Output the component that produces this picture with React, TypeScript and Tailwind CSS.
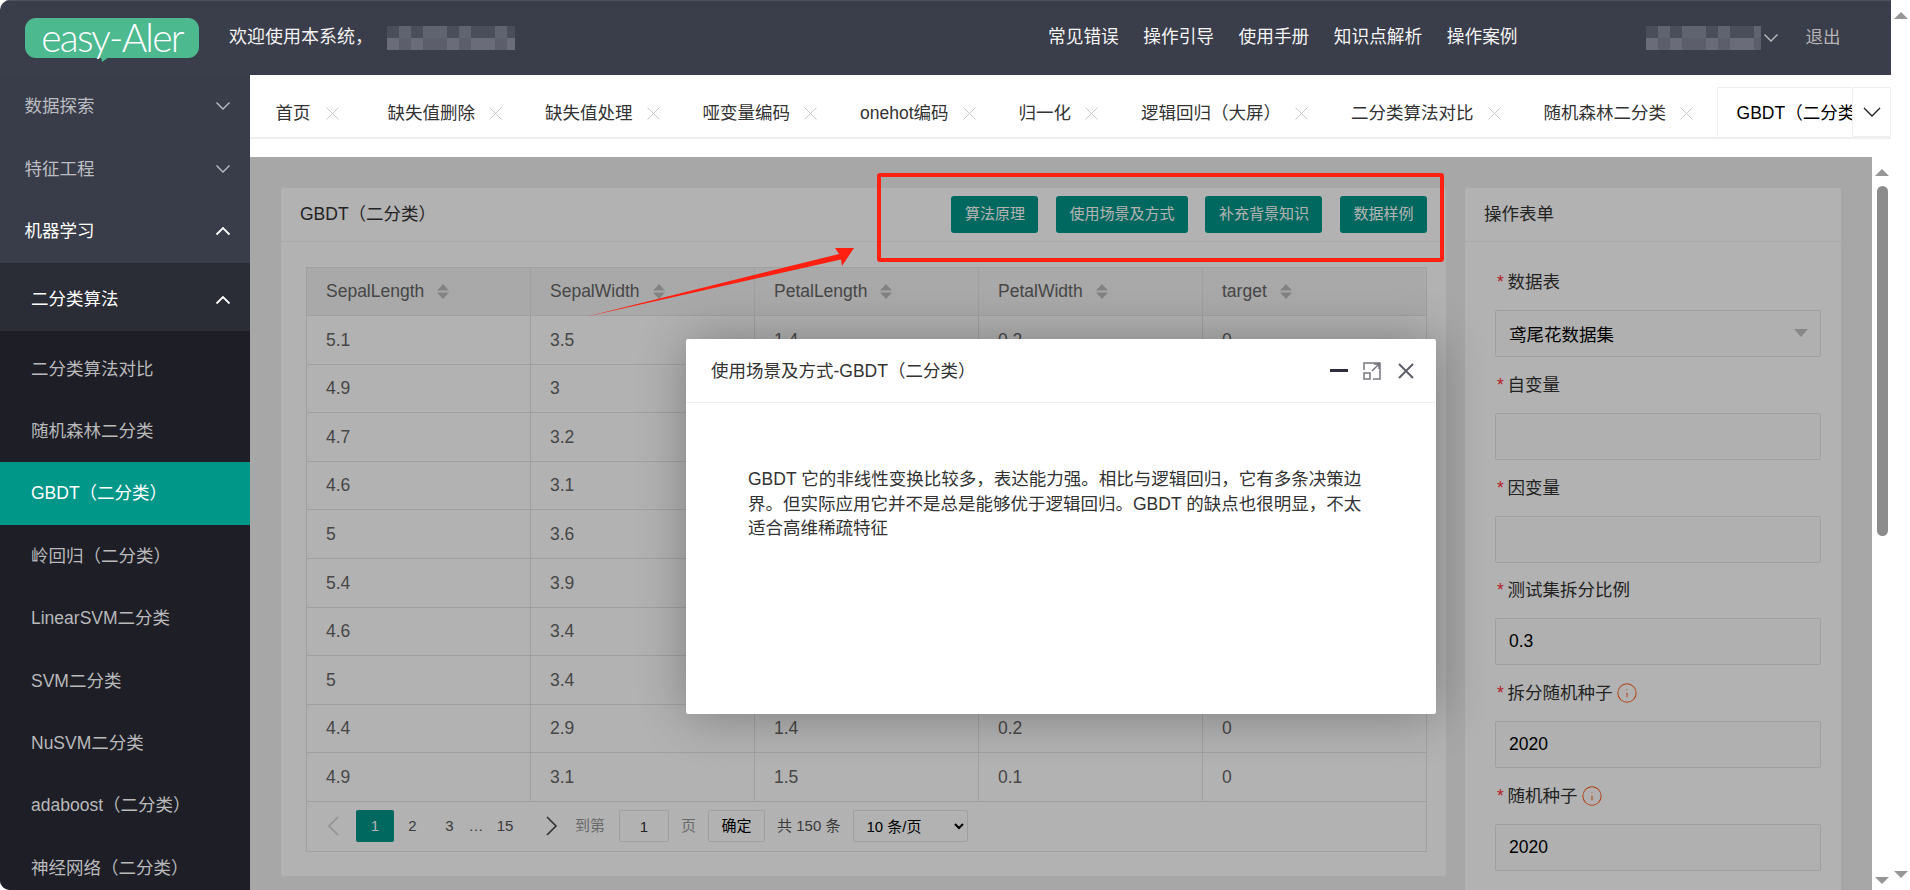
import { Info } from "lucide-react";

const topMenus = [
  { label: "数据探索", open: false },
  { label: "特征工程", open: false },
  { label: "机器学习", open: true },
];

const subMenus = [
  "二分类算法对比",
  "随机森林二分类",
  "GBDT（二分类）",
  "岭回归（二分类）",
  "LinearSVM二分类",
  "SVM二分类",
  "NuSVM二分类",
  "adaboost（二分类）",
  "神经网络（二分类）",
];

const navLinks = ["常见错误", "操作引导", "使用手册", "知识点解析", "操作案例"];

const tabs = ["缺失值删除", "缺失值处理", "哑变量编码", "onehot编码", "归一化", "逻辑回归（大屏）", "二分类算法对比", "随机森林二分类"];

const actions = ["算法原理", "使用场景及方式", "补充背景知识", "数据样例"];

const columns = ["SepalLength", "SepalWidth", "PetalLength", "PetalWidth", "target"];

const rows = [
  ["5.1", "3.5", "1.4", "0.2", "0"],
  ["4.9", "3", "1.4", "0.2", "0"],
  ["4.7", "3.2", "1.3", "0.2", "0"],
  ["4.6", "3.1", "1.5", "0.2", "0"],
  ["5", "3.6", "1.4", "0.2", "0"],
  ["5.4", "3.9", "1.7", "0.4", "0"],
  ["4.6", "3.4", "1.4", "0.3", "0"],
  ["5", "3.4", "1.5", "0.2", "0"],
  ["4.4", "2.9", "1.4", "0.2", "0"],
  ["4.9", "3.1", "1.5", "0.1", "0"],
];

const formItems = [
  { label: "数据表", value: "鸢尾花数据集", select: true },
  { label: "自变量", value: "" },
  { label: "因变量", value: "" },
  { label: "测试集拆分比例", value: "0.3" },
  { label: "拆分随机种子", value: "2020", tip: true },
  { label: "随机种子", value: "2020", tip: true },
];

const mosaicShades = ["#4a4d5a", "#5c5f6b", "#666975", "#535663", "#606370", "#6a6d79", "#565966", "#5f626e"];

function Mosaic({ width, height }: { width: number; height: number }) {
  const cols = Math.ceil(width / 12);
  const cells = [];
  for (let y = 0; y < 2; y++) {
    for (let x = 0; x < cols; x++) {
      cells.push(
        <rect key={`${x}-${y}`} x={x * 12} y={y * 12} width="12" height="12" fill={mosaicShades[(x * 3 + y * 5 + (x % 4)) % mosaicShades.length]} />
      );
    }
  }
  return (
    <svg width={width} height={height} viewBox={`0 0 ${width} ${height}`} className="block shrink-0">
      {cells}
    </svg>
  );
}

function Chevron({ up, className, width = 1.4 }: { up?: boolean; className?: string; width?: number }) {
  return (
    <svg width="16" height="10" viewBox="0 0 16 10" fill="none" stroke="currentColor" strokeWidth={width} className={className}>
      <path d={up ? "M1.5 8.5 8 2l6.5 6.5" : "M1.5 1.5 8 8l6.5-6.5"} />
    </svg>
  );
}

function TabClose() {
  return (
    <svg width="13" height="13" viewBox="0 0 13 13" stroke="#c9c9c9" strokeWidth="1" className="shrink-0">
      <path d="M.5.5l12 12M12.5.5l-12 12" />
    </svg>
  );
}

function SortIcon() {
  return (
    <svg width="12" height="15" viewBox="0 0 12 15" fill="#bcbcbc" className="ml-[13px] shrink-0">
      <path d="M6 0l6 6.5H0zM6 15L0 8.5h12z" />
    </svg>
  );
}

function Pager() {
  const cell = "flex h-8 items-center justify-center";
  return (
    <div className="flex h-[50px] items-center border-x border-b border-[#e6e6e6] pl-5 text-[15px] text-[#555]">
      <svg width="12" height="20" viewBox="0 0 12 20" fill="none" stroke="#d0d0d0" strokeWidth="1.6" className="mr-[17px]">
        <path d="M11 1 2 10l9 9" />
      </svg>
      <div className={`${cell} w-[38px] rounded-[2px] bg-[#009688] text-white`}>1</div>
      <div className={`${cell} w-[37px]`}>2</div>
      <div className={`${cell} w-[37px]`}>3</div>
      <div className={`${cell} w-[16px]`}>…</div>
      <div className={`${cell} w-[42px]`}>15</div>
      <svg width="12" height="20" viewBox="0 0 12 20" fill="none" stroke="#444" strokeWidth="1.6" className="ml-5">
        <path d="M1 1l9 9-9 9" />
      </svg>
      <span className="ml-[17px] text-[#999]">到第</span>
      <input defaultValue="1" className="ml-[14px] h-8 w-[50px] rounded-[2px] border border-[#e6e6e6] text-center text-[#333] outline-none" />
      <span className="ml-3 text-[#999]">页</span>
      <button className="ml-3 h-8 w-[57px] rounded-[2px] border border-[#e6e6e6] text-black">确定</button>
      <span className="ml-3">共 150 条</span>
      <select defaultValue="10" className="ml-[13px] h-8 w-[115px] rounded-[2px] border border-[#e6e6e6] pl-2 text-black outline-none">
        <option value="10">10 条/页</option>
        <option value="20">20 条/页</option>
      </select>
    </div>
  );
}

function FormField({ item }: { item: (typeof formItems)[number] }) {
  return (
    <div className="h-[102.8px]">
      <div className="flex h-[47px] items-start pl-[2px] text-[17.5px] leading-[38px] text-[#333]">
        <span className="w-[10.5px] text-[#ff2b3a]">*</span>
        {item.label}
        {item.tip && <Info size={22} strokeWidth={1.1} color="#ff5a1f" className="ml-[3px] mt-[8px]" />}
      </div>
      <div className="relative">
        <input
          readOnly
          defaultValue={item.value}
          className="h-[47px] w-full rounded-[2px] border border-[#e6e6e6] bg-[#fcfcfc] pl-[13px] text-[17.5px] text-black outline-none"
        />
        {item.select && (
          <svg width="14" height="8" viewBox="0 0 14 8" fill="#c2c2c2" className="absolute right-[13px] top-[19px]">
            <path d="M0 0h14L7 8z" />
          </svg>
        )}
      </div>
    </div>
  );
}

export default function App() {
  return (
    <div className="flex h-[890px] w-[1910px] overflow-hidden rounded-[10px] bg-white font-['Liberation_Sans','Noto_Sans_CJK_SC',sans-serif]">
      <div className="flex min-w-0 flex-1 flex-col">
        <header className="flex h-[75px] shrink-0 items-center border-t border-[#4f525e] bg-[#3a3d4a] pb-px">
          <div className="relative ml-[25px] flex h-10 w-[174px] items-center justify-center rounded-[11px] bg-[#4cb98f] font-['Lato',sans-serif] text-[39px] font-light leading-none tracking-[-1.8px] text-white">
            easy-Aler
            <svg width="8" height="5" viewBox="0 0 8 5" fill="#4cb98f" className="absolute left-[76px] top-[39px]">
              <path d="M0 0h8L1 5z" />
            </svg>
          </div>
          <span className="ml-[30px] text-[18px] text-[#f2f2f2]">欢迎使用本系统，</span>
          <div className="ml-[14px]">
            <Mosaic width={128} height={24} />
          </div>
          <nav className="ml-[533px] flex gap-[24.5px] text-[17.7px] text-[#f5f5f5]">
            {navLinks.map((link) => (
              <span key={link}>{link}</span>
            ))}
          </nav>
          <div className="ml-[128px]">
            <Mosaic width={115} height={24} />
          </div>
          <Chevron className="ml-[2px] text-[#bdbdbd]" />
          <span className="ml-[27px] text-[17.5px] text-[#b5b5b5]">退出</span>
        </header>

        <div className="flex min-h-0 flex-1">
          <aside className="w-[250px] shrink-0 overflow-hidden bg-[#393d49] text-[17.5px]">
            {topMenus.map((menu) => (
              <div
                key={menu.label}
                className={`flex h-[62.5px] items-center justify-between pl-[24.5px] pr-[19px] ${menu.open ? "text-white" : "text-[#bcbdc2]"}`}
              >
                {menu.label}
                <Chevron up={menu.open} width={menu.open ? 1.8 : 1.4} />
              </div>
            ))}
            <div className="flex h-[68px] items-center justify-between bg-[#2a2c36] pl-[31px] pr-[19px] pt-[6px] text-white">
              二分类算法
              <Chevron up width={1.8} />
            </div>
            <ul className="bg-[#1d1e26] pt-[7px] text-[#b9b9bb]">
              {subMenus.map((menu) => (
                <li
                  key={menu}
                  className={`flex h-[62.4px] items-center pl-[31px] ${menu === "GBDT（二分类）" ? "bg-[#009688] text-white" : ""}`}
                >
                  {menu}
                </li>
              ))}
            </ul>
          </aside>

          <main className="flex min-w-0 flex-1 flex-col">
            <div className="flex h-[64px] shrink-0 items-end border-b-2 border-[#eeeeee] text-[17.5px] text-[#333]">
              <div className="flex h-[50px] min-w-0 flex-1 overflow-hidden pl-1">
                <div className="mr-[6px] flex shrink-0 items-center gap-[15px] px-[21.5px] pt-[2px]">
                  首页
                  <TabClose />
                </div>
                {tabs.map((tab) => (
                  <div key={tab} className="flex shrink-0 items-center gap-[14px] px-[21.5px] pt-[2px]">
                    {tab}
                    <TabClose />
                  </div>
                ))}
                <div className="ml-[2px] flex shrink-0 items-center rounded-t-[2px] border-x border-t border-[#eeeeee] pl-[19px] pt-[2px] text-black">
                  GBDT（二分类）
                </div>
              </div>
              <div className="flex h-[50px] w-[39px] shrink-0 items-center justify-center rounded-t-[2px] border border-[#eeeeee] bg-white">
                <svg width="20" height="12" viewBox="0 0 20 12" fill="none" stroke="#222" strokeWidth="1.4">
                  <path d="M2 2l8 8 8-8" />
                </svg>
              </div>
            </div>
            <div className="h-[18px] shrink-0" />

            <div className="flex min-h-0 flex-1">
              <div className="relative min-w-0 flex-1 overflow-hidden">
                <div className="flex items-start gap-[19px] bg-[#f0f0f0] p-[31px]">
                  <section className="h-[688px] w-[1165px] shrink-0 rounded-[3px] bg-white">
                    <div className="flex h-[54px] items-center justify-between border-b border-[#f2f2f2] pl-[19px] pr-[19px]">
                      <h2 className="text-[17.5px] text-[#333]">GBDT（二分类）</h2>
                      <div className="flex gap-[17.5px]">
                        {actions.map((action) => (
                          <button key={action} className="h-[37px] rounded-[3px] bg-[#009688] px-[13.5px] text-[15px] text-white">
                            {action}
                          </button>
                        ))}
                      </div>
                    </div>
                    <div className="pl-[25px] pr-[19px] pt-[25px]">
                      <table className="w-full table-fixed border-collapse text-[17.5px] text-[#666]">
                        <thead>
                          <tr className="h-[48px] bg-[#f2f2f2]">
                            {columns.map((column) => (
                              <th key={column} className="border border-[#e6e6e6] pl-[19px] text-left font-normal">
                                <div className="flex items-center">
                                  {column}
                                  <SortIcon />
                                </div>
                              </th>
                            ))}
                          </tr>
                        </thead>
                        <tbody>
                          {rows.map((row, i) => (
                            <tr key={i} className="h-[48.6px]">
                              {row.map((value, j) => (
                                <td key={j} className="border border-[#e6e6e6] pl-[19px]">
                                  {value}
                                </td>
                              ))}
                            </tr>
                          ))}
                        </tbody>
                      </table>
                      <Pager />
                    </div>
                  </section>

                  <section className="w-[376px] shrink-0 rounded-[3px] bg-white">
                    <div className="flex h-[54px] items-center border-b border-[#f2f2f2] pl-[19px] text-[17.5px] text-[#333]">操作表单</div>
                    <div className="pl-[30px] pr-5 pt-[21px]">
                      {formItems.map((item) => (
                        <FormField key={item.label} item={item} />
                      ))}
                      <div className="flex h-[39px] items-start pl-[2px] text-[17.5px] leading-[38px] text-[#ff2b3a]">*</div>
                    </div>
                  </section>
                </div>

                <div className="absolute inset-0 bg-black/30" />

                {/* annotation drawn on the screenshot */}
                <div className="absolute left-[627px] top-[16px] h-[89px] w-[567px] rounded-[3px] border-4 border-[#ff2012]" />
                <svg width="290" height="90" viewBox="0 0 290 90" className="absolute left-[330px] top-[85px]" fill="#ff2012">
                  <path d="M5 75 259 12 255 6 274 6 262 24 261 17.5Z" />
                </svg>

                <div className="absolute left-[436px] top-[182px] flex h-[375px] w-[750px] flex-col rounded-[2px] bg-white shadow-[1px_1px_50px_rgba(0,0,0,0.3)]">
                  <div className="flex h-[64px] shrink-0 items-center justify-between border-b border-[#f0f0f0] pl-[25px] pr-[22px]">
                    <h3 className="mt-px text-[17.5px] text-[#333]">使用场景及方式-GBDT（二分类）</h3>
                    <div className="flex items-center gap-[15px]">
                      <div className="h-[3px] w-[18px] bg-[#2e2d3c]" />
                      <svg width="18" height="18" viewBox="0 0 18 18" fill="none" stroke="#77777f" strokeWidth="1.5">
                        <path d="M1 8V1h16v16h-7M1 11h6v6H1zM9 9l7-7M11 2h5v5" />
                      </svg>
                      <svg width="16" height="16" viewBox="0 0 16 16" fill="none" stroke="#5e5e69" strokeWidth="2" className="ml-[2px]">
                        <path d="M1 1l14 14M15 1 1 15" />
                      </svg>
                    </div>
                  </div>
                  <p className="box-content w-[630px] pl-[62px] pt-[64px] text-[17.5px] leading-[24.5px] text-[#333]">
                    GBDT 它的非线性变换比较多，表达能力强。相比与逻辑回归，它有多条决策边界。但实际应用它并不是总是能够优于逻辑回归。GBDT 的缺点也很明显，不太适合高维稀疏特征
                  </p>
                </div>
              </div>

              <div className="flex w-[19px] shrink-0 flex-col items-center bg-white pl-px pt-3">
                <svg width="14" height="7" viewBox="0 0 14 7" fill="#969696">
                  <path d="M7 0l7 7H0z" />
                </svg>
                <div className="ml-px mt-[10px] h-[350px] w-[11px] rounded-full bg-[#8c8c8c]" />
                <svg width="14" height="7" viewBox="0 0 14 7" fill="#969696" className="mt-[341px]">
                  <path d="M0 0h14L7 7z" />
                </svg>
              </div>
            </div>
          </main>
        </div>
      </div>

      <div className="flex w-[19px] shrink-0 flex-col items-center justify-between bg-white pb-3 pt-3">
        <svg width="14" height="7" viewBox="0 0 14 7" fill="#969696">
          <path d="M7 0l7 7H0z" />
        </svg>
        <svg width="14" height="7" viewBox="0 0 14 7" fill="#969696">
          <path d="M0 0h14L7 7z" />
        </svg>
      </div>
    </div>
  );
}
